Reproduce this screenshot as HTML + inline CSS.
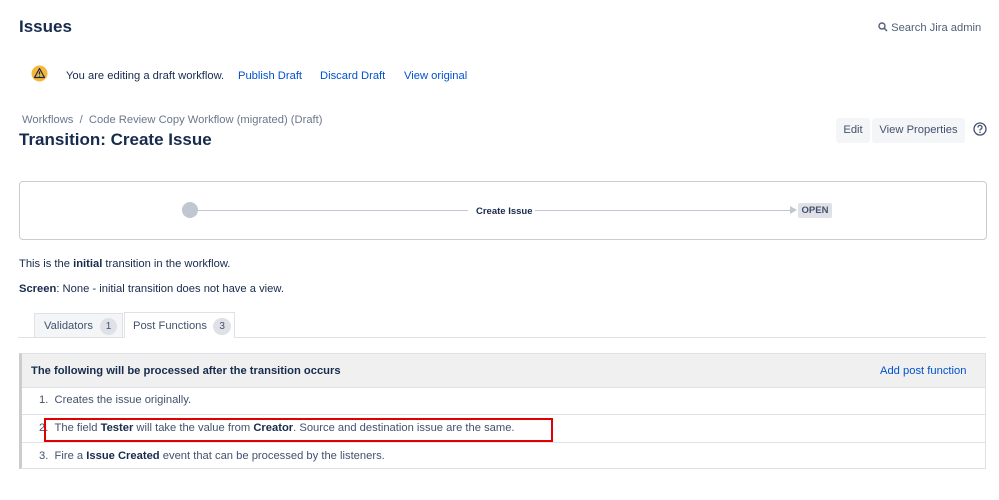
<!DOCTYPE html>
<html><head><style>
body{margin:0;width:999px;height:500px;background:#fff;font-family:"Liberation Sans",sans-serif;font-size:11.2px;color:#172b4d;position:relative;overflow:hidden}
.a{position:absolute;white-space:nowrap}
.l{color:#0052cc}
b{font-weight:700}
</style></head><body>
<div class="a" style="left:19px;top:17px;font-size:17px;font-weight:600">Issues</div>
<div class="a" style="left:878px;top:22px;color:#505f79"><svg width="10" height="10" viewBox="0 0 10 10" style="vertical-align:-1px"><circle cx="4" cy="4" r="3" fill="none" stroke="#505f79" stroke-width="1.4"/><path d="M6 6l3 3" stroke="#505f79" stroke-width="1.5"/></svg> Search Jira admin</div>
<svg class="a" style="left:31px;top:65px" width="17" height="17" viewBox="0 0 17 17"><circle cx="8.5" cy="8.5" r="8" fill="#f5b73b"/><path d="M8.5 3.5L13.5 12.5H3.5Z" fill="none" stroke="#172b4d" stroke-width="1.2" stroke-linejoin="round"/><path d="M8.5 6.5v3M8.5 10.8v.8" stroke="#172b4d" stroke-width="1.2"/></svg>
<div class="a" style="left:66px;top:70px">You are editing a draft workflow.</div>
<div class="a l" style="left:238px;top:70px">Publish Draft</div>
<div class="a l" style="left:320px;top:70px">Discard Draft</div>
<div class="a l" style="left:404px;top:70px">View original</div>
<div class="a" style="left:22px;top:114px;color:#6b778c">Workflows &nbsp;/ &nbsp;Code Review Copy Workflow (migrated) (Draft)</div>
<div class="a" style="left:19px;top:130px;font-size:17px;font-weight:600">Transition: Create Issue</div>
<div class="a" style="left:836px;top:118px;width:34px;height:25px;background:#f4f5f7;border-radius:3px;line-height:25px;text-align:center;color:#42526e">Edit</div>
<div class="a" style="left:872px;top:118px;width:93px;height:25px;background:#f4f5f7;border-radius:3px;line-height:25px;text-align:center;color:#42526e">View Properties</div>
<svg class="a" style="left:973px;top:122px" width="14" height="14" viewBox="0 0 14 14"><circle cx="7" cy="7" r="6" fill="none" stroke="#42526e" stroke-width="1.3"/><path d="M5 5.5a2 2 0 1 1 2.5 1.8c-.5.2-.5.6-.5 1.2" fill="none" stroke="#42526e" stroke-width="1.3"/><circle cx="7" cy="10.3" r=".8" fill="#42526e"/></svg>
<div class="a" style="left:19px;top:181px;width:966px;height:57px;border:1px solid #ccc;border-radius:4px"></div>
<div class="a" style="left:182px;top:202px;width:16px;height:16px;border-radius:50%;background:#c1c7d0"></div>
<div class="a" style="left:198px;top:210px;width:270px;height:1px;background:#c1c7d0"></div>
<div class="a" style="left:476px;top:206px;font-size:9.5px;font-weight:700">Create Issue</div>
<div class="a" style="left:535px;top:210px;width:255px;height:1px;background:#c1c7d0"></div>
<div class="a" style="left:790px;top:206px;width:0;height:0;border-left:7px solid #c1c7d0;border-top:4px solid transparent;border-bottom:4px solid transparent"></div>
<div class="a" style="left:798px;top:203px;width:34px;height:15px;background:#dfe1e6;border-radius:2px;font-size:9.5px;font-weight:700;line-height:15px;text-align:center;color:#42526e">OPEN</div>
<div class="a" style="left:19px;top:258px">This is the <b>initial</b> transition in the workflow.</div>
<div class="a" style="left:19px;top:283px"><b>Screen</b>: None - initial transition does not have a view.</div>
<div class="a" style="left:18px;top:337px;width:968px;height:1px;background:#dfe1e6"></div>
<div class="a" style="left:34px;top:313px;width:89px;height:24px;background:#f4f5f7;border:1px solid #dfe1e6;border-bottom:none;box-sizing:border-box;line-height:24px;padding-left:9px;color:#42526e">Validators <span style="display:inline-block;width:17px;height:17px;border-radius:9px;background:#dfe1e6;text-align:center;line-height:17px;font-size:10px;margin-left:4px">1</span></div>
<div class="a" style="left:124px;top:312px;width:111px;height:26px;background:#fff;border:1px solid #dfe1e6;border-bottom:none;box-sizing:border-box;line-height:26px;padding-left:8px;color:#42526e">Post Functions <span style="display:inline-block;width:18px;height:17px;border-radius:9px;background:#dfe1e6;text-align:center;line-height:17px;font-size:10px;margin-left:3px">3</span></div>
<div class="a" style="left:19px;top:353px;width:967px;height:116px;border:1px solid #dfe1e6;border-left:3px solid #ccc;box-sizing:border-box"></div>
<div class="a" style="left:22px;top:354px;width:963px;height:33px;background:#f0f0f0;border-bottom:1px solid #dfe1e6"></div>
<div class="a" style="left:31px;top:365px;font-weight:700">The following will be processed after the transition occurs</div>
<div class="a l" style="left:880px;top:365px">Add post function</div>
<div class="a" style="left:22px;top:414px;width:963px;height:1px;background:#dfe1e6"></div>
<div class="a" style="left:22px;top:442px;width:963px;height:1px;background:#dfe1e6"></div>
<div class="a" style="left:39px;top:394px;color:#42526e">1. &nbsp;Creates the issue originally.</div>
<div class="a" style="left:39px;top:422px;color:#42526e">2. &nbsp;The field <b style="color:#172b4d">Tester</b> will take the value from <b style="color:#172b4d">Creator</b>. Source and destination issue are the same.</div>
<div class="a" style="left:39px;top:450px;color:#42526e">3. &nbsp;Fire a <b style="color:#172b4d">Issue Created</b> event that can be processed by the listeners.</div>
<div class="a" style="left:44px;top:418px;width:509px;height:24px;border:2px solid #e00000;box-sizing:border-box"></div>
</body></html>
